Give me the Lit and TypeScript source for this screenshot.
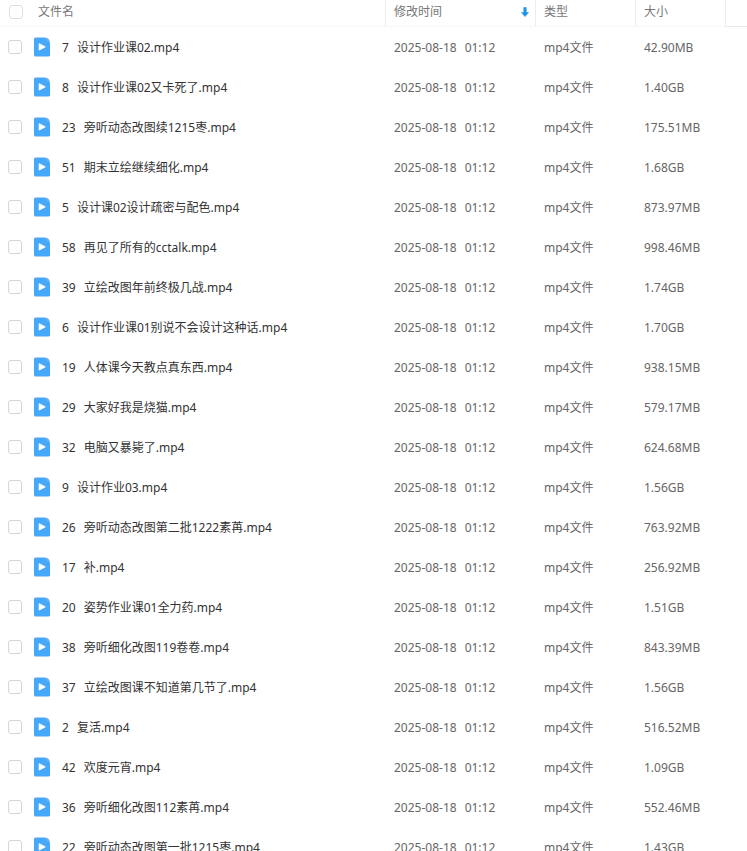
import { LitElement, html, css, svg } from "lit";
import { customElement } from "lit/decorators.js";

interface FileEntry {
  no: string;
  name: string;
  size: string;
}

const DATE = "2025-08-18";
const TIME = "01:12";
const TYPE = "mp4文件";

const files: FileEntry[] = [
  { no: "7", name: "设计作业课02.mp4", size: "42.90MB" },
  { no: "8", name: "设计作业课02又卡死了.mp4", size: "1.40GB" },
  { no: "23", name: "旁听动态改图续1215枣.mp4", size: "175.51MB" },
  { no: "51", name: "期末立绘继续细化.mp4", size: "1.68GB" },
  { no: "5", name: "设计课02设计疏密与配色.mp4", size: "873.97MB" },
  { no: "58", name: "再见了所有的cctalk.mp4", size: "998.46MB" },
  { no: "39", name: "立绘改图年前终极几战.mp4", size: "1.74GB" },
  { no: "6", name: "设计作业课01别说不会设计这种话.mp4", size: "1.70GB" },
  { no: "19", name: "人体课今天教点真东西.mp4", size: "938.15MB" },
  { no: "29", name: "大家好我是烧猫.mp4", size: "579.17MB" },
  { no: "32", name: "电脑又暴毙了.mp4", size: "624.68MB" },
  { no: "9", name: "设计作业03.mp4", size: "1.56GB" },
  { no: "26", name: "旁听动态改图第二批1222素苒.mp4", size: "763.92MB" },
  { no: "17", name: "补.mp4", size: "256.92MB" },
  { no: "20", name: "姿势作业课01全力药.mp4", size: "1.51GB" },
  { no: "38", name: "旁听细化改图119卷卷.mp4", size: "843.39MB" },
  { no: "37", name: "立绘改图课不知道第几节了.mp4", size: "1.56GB" },
  { no: "2", name: "复活.mp4", size: "516.52MB" },
  { no: "42", name: "欢度元宵.mp4", size: "1.09GB" },
  { no: "36", name: "旁听细化改图112素苒.mp4", size: "552.46MB" },
  { no: "22", name: "旁听动态改图第一批1215枣.mp4", size: "1.43GB" },
];

const videoShape = svg`
  <path fill="#46a8fb" d="M1.5 0H11L16 5V17.5Q16 19 14.5 19H1.5Q0 19 0 17.5V1.5Q0 0 1.5 0Z"/>
  <path fill="#5fb0f0" d="M11 0Q15.6 .6 16 5L15 5.6Q12 4.6 11 0Z"/>
  <path fill="#fff" stroke="#fff" stroke-width="1" stroke-linejoin="round" d="M5.2 6.2L11.2 9.4L5.2 12.6Z"/>`;

@customElement("app-root")
export class AppRoot extends LitElement {
  static styles = css`
    :host {
      display: block;
      background: #fff;
      color: #666;
      font: 12px/16px "Noto Sans", "Noto Sans CJK SC", sans-serif;
    }
    table {
      width: 100%;
      table-layout: fixed;
      border-collapse: separate;
      border-spacing: 0;
    }
    .col-date {
      width: 150px;
    }
    .col-type {
      width: 100px;
    }
    .col-size {
      width: 90px;
    }
    .col-rest {
      width: 21px;
    }
    th,
    td {
      box-sizing: border-box;
      padding: 0 8px;
      text-align: left;
      font-weight: 400;
      white-space: nowrap;
      overflow: hidden;
    }
    th {
      height: 27px;
      padding-bottom: 2px;
      border-right: 1px solid #ececec;
      border-bottom: 1px solid #f8f8f8;
      color: #777;
    }
    th:last-child {
      border-right: 0;
      border-bottom-color: #e8e8e8;
    }
    td {
      height: 40px;
      padding-top: 2px;
    }
    td:first-child {
      padding-top: 0;
    }
    .head,
    .file {
      display: flex;
      align-items: center;
    }
    .head {
      gap: 16px;
    }
    .head input {
      margin-left: 1px;
    }
    .file {
      color: #333;
      gap: 12px;
    }
    .label {
      display: flex;
      gap: 8px;
      padding-top: 2px;
      cursor: pointer;
    }
    input {
      appearance: none;
      flex: none;
      box-sizing: border-box;
      width: 14px;
      height: 14px;
      margin: 0;
      border: 1px solid #d6d6d6;
      border-radius: 3px;
      background: #fff;
    }
    input:checked {
      background: #46a8fb;
      border-color: #46a8fb;
    }
    .head input {
      border-color: #dedede;
    }
    .head label {
      margin-left: -1px;
    }
    .video {
      flex: none;
      width: 16px;
      height: 20px;
    }
    .sort {
      display: flex;
      align-items: center;
      justify-content: space-between;
      width: 100%;
      padding: 0;
      border: 0;
      background: none;
      color: inherit;
      font: inherit;
      cursor: pointer;
    }
    .arrow {
      width: 8px;
      height: 10px;
      margin-right: -2px;
    }
    time {
      display: flex;
      gap: 8px;
    }
  `;

  private row(file: FileEntry, index: number) {
    const id = `file-${index}`;
    return html`<tr>
      <td>
        <div class="file">
          <input type="checkbox" id=${id} />
          <svg class="video" viewBox="0 0 16 19" aria-hidden="true">${videoShape}</svg>
          <label class="label" for=${id}><span>${file.no}</span><span>${file.name}</span></label>
        </div>
      </td>
      <td><time><span>${DATE}</span><span>${TIME}</span></time></td>
      <td>${TYPE}</td>
      <td>${file.size}</td>
      <td></td>
    </tr>`;
  }

  render() {
    return html`<table>
      <colgroup>
        <col />
        <col class="col-date" />
        <col class="col-type" />
        <col class="col-size" />
        <col class="col-rest" />
      </colgroup>
      <thead>
        <tr>
          <th>
            <div class="head"><input type="checkbox" id="all" /><label for="all">文件名</label></div>
          </th>
          <th>
            <button class="sort" type="button">
              <span>修改时间</span>
              <svg class="arrow" viewBox="0 0 8 10" aria-hidden="true">
                <path fill="#1b94e8" stroke="#1b94e8" stroke-width=".6" stroke-linejoin="round" d="M2.8 .4H5.2V5.6H7.5L4 9.6L.5 5.6H2.8Z" />
              </svg>
            </button>
          </th>
          <th>类型</th>
          <th>大小</th>
          <th></th>
        </tr>
      </thead>
      <tbody>
        ${files.map((file, index) => this.row(file, index))}
      </tbody>
    </table>`;
  }
}
